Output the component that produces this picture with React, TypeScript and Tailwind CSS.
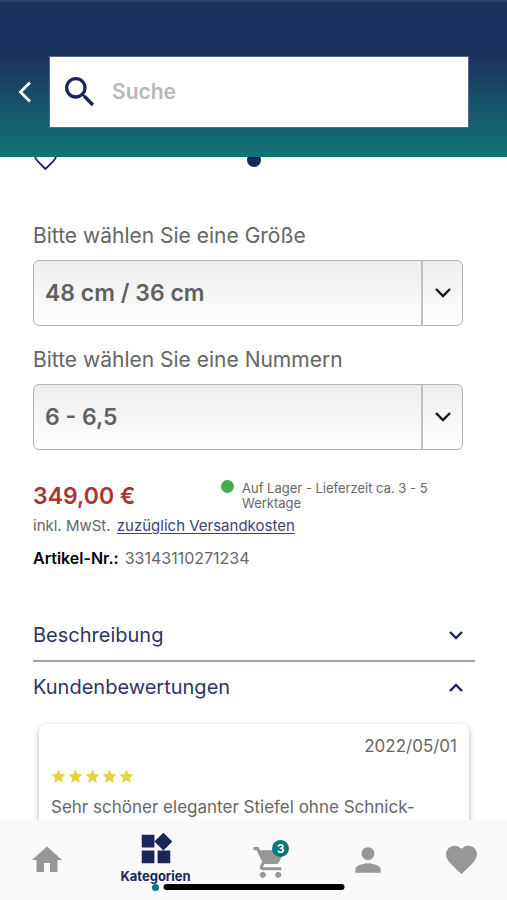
import { useState } from 'react'
import { MdFavorite, MdHome, MdPerson, MdSearch, MdShoppingCart, MdStar, MdWidgets } from 'react-icons/md'

export default function App() {
  return (
    <div className="flex h-screen flex-col overflow-hidden bg-white font-['Inter','Liberation_Sans',sans-serif] text-[#666666]">
      <Header />
      <main className="min-h-0 flex-1 overflow-hidden">
        <div className="-mt-2 grid grid-cols-3 items-start px-[33px]">
          <button type="button" aria-label="Merken" className="w-6 text-[#1b2658]">
            <svg width="25" height="24" viewBox="0 0 25 24" fill="none" stroke="currentColor" strokeWidth="1.8">
              <path d="M12.5 20 4.6 12.2C2.7 10.2 2 8.5 2 6.5 2 3.5 4.5 1 7.5 1c2 0 3.900 1 5 2.600C13.6 2 15.5 1 17.5 1 20.5 1 23 3.500 23 6.500c0 2-.7 3.700-2.600 5.700Z" />
            </svg>
          </button>
          <span className="mt-1 size-[14px] justify-self-center rounded-full bg-[#1b2658]" />
        </div>

        <div className="mt-[49px] pr-11 pl-[33px]">
          <SelectField id="size" label="Bitte wählen Sie eine Größe" value="48 cm / 36 cm" />
          <div className="mt-5">
            <SelectField id="number" label="Bitte wählen Sie eine Nummern" value="6 - 6,5" />
          </div>
        </div>

        <Price />

        <section className="mt-[38px] pr-8 pl-[33px]">
          <AccordionHeader title="Beschreibung" />
          <hr className="border-t-2 border-[#a29fba]" />
          <AccordionHeader title="Kundenbewertungen" open />
          <Review />
        </section>
      </main>
      <TabBar />
    </div>
  )
}

function Header() {
  return (
    <header className="relative z-10 flex shrink-0 items-center border-t-2 border-[#23426a] bg-linear-to-b from-[#1a325e] from-35% via-[#13616f] via-80% to-[#127476] pt-[54px] pr-[38px] pb-[29px]">
      <button type="button" aria-label="Zurück" className="flex w-[49px] justify-center text-white">
        <svg width="14" height="22" viewBox="0 0 14 22" fill="none" stroke="currentColor" strokeWidth="2.8">
          <path d="M12 1.5 2.5 11l9.5 9.5" />
        </svg>
      </button>
      <div className="flex h-[72px] min-w-0 flex-1 items-center border border-[#54668b] bg-white pl-2.5">
        <MdSearch size={40} className="shrink-0 text-[#1b2658]" />
        <input
          type="search"
          aria-label="Suche"
          placeholder="Suche"
          className="ml-3 min-w-0 flex-1 text-[21px] font-semibold text-[#666666] outline-none placeholder:text-[#b8b8b8]"
        />
      </div>
    </header>
  )
}

function SelectField({ id, label, value }: { id: string; label: string; value: string }) {
  return (
    <div>
      <label htmlFor={id} className="block text-[21px] leading-7">
        {label}
      </label>
      <div className="relative mt-2.5">
        <select
          id={id}
          className="block h-[66px] w-full appearance-none rounded-md border border-[#b4b4b4] bg-linear-to-b from-[#ededed] to-white pr-12 pl-[11px] text-[23px] font-semibold text-[#616161]"
        >
          <option>{value}</option>
        </select>
        <span className="pointer-events-none absolute inset-y-0 right-0 flex w-[42px] items-center justify-center border-l-2 border-[#c0c0c0] text-[#111111]">
          <svg width="16" height="10" viewBox="0 0 16 10" fill="none" stroke="currentColor" strokeWidth="2.4">
            <path d="m1 1 7 7 7-7" />
          </svg>
        </span>
      </div>
    </div>
  )
}

function Price() {
  return (
    <section className="mt-[30px] pr-11 pl-[33px]">
      <div className="flex items-start">
        <p className="w-[188px] text-[23px] leading-8 font-semibold text-[#b03232]">349,00 €</p>
        <span className="size-[13px] shrink-0 rounded-full bg-[#43ad4f]" />
        <p className="mt-px ml-2 w-[190px] text-[13px] leading-[15px]">Auf Lager - Lieferzeit ca. 3 - 5 Werktage</p>
      </div>
      <p className="text-[15px] leading-7">
        inkl. MwSt.{' '}
        <a href="#versand" className="ml-0.5 text-[#3f4275] underline underline-offset-2">
          zuzüglich Versandkosten
        </a>
      </p>
      <p className="mt-1 text-base leading-7">
        <strong className="mr-1.5 font-semibold text-black">Artikel-Nr.:</strong>
        33143110271234
      </p>
    </section>
  )
}

function AccordionHeader({ title, open = false }: { title: string; open?: boolean }) {
  const [expanded, setExpanded] = useState(open)

  return (
    <button
      type="button"
      aria-expanded={expanded}
      onClick={() => setExpanded(!expanded)}
      className="flex h-[50px] w-full items-center justify-between pr-3 text-left text-xl text-[#30355f]"
    >
      {title}
      <svg width="14" height="9" viewBox="0 0 14 9" fill="none" stroke="#1b2658" strokeWidth="2.4">
        <path d={expanded ? 'm1 8 6-6 6 6' : 'm1 1 6 6 6-6'} />
      </svg>
    </button>
  )
}

function Review() {
  return (
    <article className="mt-3 mr-1.5 ml-1.5 h-48 rounded-lg px-3 pt-2 shadow-[0_2px_6px_rgba(0,0,0,0.28)]">
      <time className="block text-right text-[17px] leading-7">2022/05/01</time>
      <div role="img" aria-label="5 von 5 Sternen" className="mt-2 -ml-px flex text-[#e5d442]">
        {[1, 2, 3, 4, 5].map((n) => (
          <MdStar key={n} size={17} />
        ))}
      </div>
      <p className="mt-2.5 text-[17px] leading-6">Sehr schöner eleganter Stiefel ohne Schnick-</p>
    </article>
  )
}

function TabBar() {
  return (
    <nav className="relative z-10 grid h-20 shrink-0 grid-cols-[93fr_125fr_101fr_97fr_91fr] bg-[#fafafa] text-[#979797]">
      <button type="button" aria-label="Startseite" className="flex items-start justify-center pt-[22px]">
        <MdHome size={36} />
      </button>
      <button
        type="button"
        aria-current="page"
        className="flex flex-col items-center pt-2.5 text-[13px] leading-4 font-bold text-[#1b2658]"
      >
        <MdWidgets size={38} className="shrink-0" />
        Kategorien
        <span className="size-[7px] shrink-0 rounded-full bg-[#087779]" />
      </button>
      <button type="button" aria-label="Warenkorb" className="flex items-start justify-center pt-6">
        <span className="relative ml-1">
          <MdShoppingCart size={37} />
          <span className="absolute -top-1 right-0 flex size-[17px] items-center justify-center rounded-full bg-[#087779] text-xs font-bold text-white">
            3
          </span>
        </span>
      </button>
      <button type="button" aria-label="Konto" className="flex items-start justify-center pt-[21px]">
        <MdPerson size={38} />
      </button>
      <button type="button" aria-label="Merkliste" className="flex items-start justify-center pt-[21px]">
        <MdFavorite size={37} />
      </button>
      <span className="absolute bottom-[10px] left-1/2 h-[6px] w-[181px] -translate-x-1/2 rounded-full bg-black" />
    </nav>
  )
}
